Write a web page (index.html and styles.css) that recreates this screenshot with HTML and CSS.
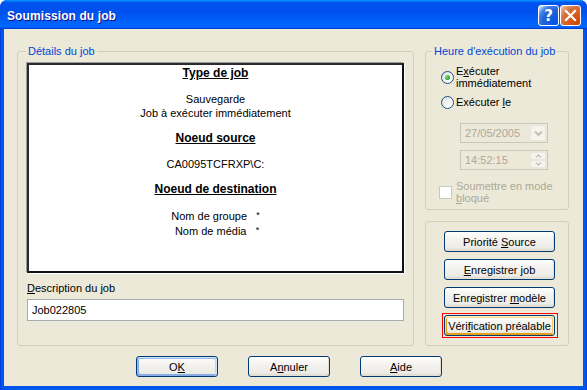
FILE: index.html
```html
<!DOCTYPE html>
<html lang="fr">
<head>
<meta charset="utf-8">
<title>Soumission du job</title>
<link rel="stylesheet" href="styles.css">
</head>
<body>
<div class="window">
  <div class="titlebar">
    <span class="title">Soumission du job</span>
    <div class="tb-buttons">
      <span class="tb-btn tb-help">?</span>
      <span class="tb-btn tb-close"><svg width="13" height="13" viewBox="0 0 13 13"><path d="M2 2 L11 11 M11 2 L2 11" stroke="#fff" stroke-width="2.2" stroke-linecap="square"/></svg></span>
    </div>
  </div>
  <div class="body">
    <div class="main">
      <fieldset class="group details">
        <legend>Détails du job</legend>
        <div class="summary">
          <div class="sec-title">Type de job</div>
          <div class="sec-text">Sauvegarde<br>Job à exécuter immédiatement</div>
          <div class="sec-title">Noeud source</div>
          <div class="sec-text">CA0095TCFRXP\C:</div>
          <div class="sec-title">Noeud de destination</div>
          <div class="sec-text pre">Nom de groupe   <span class="ast">*</span>
 Nom de média   <span class="ast">*</span></div>
        </div>
        <div class="desc-label"><u>D</u>escription du job</div>
        <div class="textbox">Job022805</div>
      </fieldset>
      <div class="right-col">
        <fieldset class="group schedule">
          <legend>Heure d'exécution du job</legend>
          <div class="opt opt-first">
            <span class="radio checked"></span>
            <span class="opt-label two">E<u>x</u>écuter<br>immédiatement</span>
          </div>
          <div class="opt">
            <span class="radio"></span>
            <span class="opt-label">Exécuter <u>l</u>e</span>
          </div>
          <div class="combo combo-date">
            <span class="combo-val">27/05/2005</span>
            <span class="combo-arrow"><svg width="9" height="7" viewBox="0 0 9 7"><path d="M1 1.5 L4.5 5 L8 1.5" fill="none" stroke="#c5c2b2" stroke-width="2"/></svg></span>
          </div>
          <div class="combo combo-time">
            <span class="combo-val">14:52:15</span>
            <span class="spin">
              <span class="spin-btn"><svg width="7" height="4" viewBox="0 0 7 4"><path d="M1 3.5 L3.5 1 L6 3.5" fill="none" stroke="#c5c2b2" stroke-width="1.4"/></svg></span>
              <span class="spin-btn"><svg width="7" height="4" viewBox="0 0 7 4"><path d="M1 0.5 L3.5 3 L6 0.5" fill="none" stroke="#c5c2b2" stroke-width="1.4"/></svg></span>
            </span>
          </div>
          <div class="opt opt-check">
            <span class="checkbox"></span>
            <span class="opt-label two disabled">Soumettre en mode<br><u>b</u>loqué</span>
          </div>
        </fieldset>
        <fieldset class="group actions">
          <button class="btn side">Priorité <u>S</u>ource</button>
          <button class="btn side"><u>E</u>nregistrer job</button>
          <button class="btn side">Enregistrer <u>m</u>odèle</button>
          <div class="focus-ring"><button class="btn side focus">Véri<u>f</u>ication préalable</button></div>
        </fieldset>
      </div>
    </div>
    <div class="footer">
      <button class="btn foot default">O<u>K</u></button>
      <button class="btn foot">A<u>n</u>nuler</button>
      <button class="btn foot"><u>A</u>ide</button>
    </div>
  </div>
</div>
</body>
</html>
```
FILE: styles.css
```css
* { box-sizing: border-box; }
html, body { margin: 0; padding: 0; }
body {
  width: 587px;
  height: 390px;
  overflow: hidden;
  background: #fff;
  font-family: "Liberation Sans", Arial, sans-serif;
  font-size: 11px;
  color: #000;
}
.window {
  width: 587px;
  height: 390px;
  display: flex;
  flex-direction: column;
  background: linear-gradient(to right, #0831d9 0, #0055ea 1px, #0055ea 586px, #0831d9 587px);
  border-radius: 7px 7px 0 0;
  overflow: hidden;
}
.titlebar {
  height: 29px;
  flex: none;
  display: flex;
  align-items: center;
  justify-content: space-between;
  padding: 2px 6px 0 7px;
  background: linear-gradient(to bottom, #0997ff 0%, #0053ee 9%, #0050ee 40%, #0066ff 86%, #0066ff 92%, #005bff 95%, #003dd7 97%, #003dd7 100%);
}
.title {
  color: #fff;
  font-weight: bold;
  font-size: 12px;
  letter-spacing: 0.1px;
  text-shadow: 1px 1px #0f1089;
}
.tb-buttons { display: flex; gap: 1px; }
.tb-btn {
  width: 21px;
  height: 21px;
  border: 1px solid #fff;
  border-radius: 3px;
  display: flex;
  align-items: center;
  justify-content: center;
  color: #fff;
}
.tb-help {
  background: radial-gradient(circle at 90% 90%, #0054e9 0%, #2263d5 55%, #4483ef 75%, #fff 100%);
  font-weight: bold;
  font-size: 15px;
  font-family: "DejaVu Sans", sans-serif;
}
.tb-close {
  background: radial-gradient(circle at 90% 90%, #cc4600 0%, #dc6527 55%, #cd7546 68%, #ffccb2 100%);
}
.body {
  flex: 1;
  margin: 0 4px 4px 4px;
  background: #ece9d8;
  padding: 16px 14px 0 13px;
  display: flex;
  flex-direction: column;
}
.main {
  display: flex;
  gap: 11px;
  height: 301px;
}
.group {
  margin: 0;
  border: 1px solid #d0d0bf;
  border-radius: 3px;
  min-width: 0;
}
.group legend {
  color: #0046d5;
  padding: 0 2px;
  line-height: 13px;
}
.details {
  width: 397px;
  padding: 0 9px;
  display: flex;
  flex-direction: column;
}
.details legend { margin-left: -1px; }
.summary {
  margin-top: 5px;
  height: 210px;
  background: #fff;
  border: 2px solid #000;
  border-color: #2b2b2b #111 #111 #2b2b2b;
  box-shadow: -1px -1px 0 #9a9a9a, 1px 1px 0 #fff;
  padding-top: 1px;
  text-align: center;
}
.sec-title {
  font-weight: bold;
  font-size: 12px;
  text-decoration: underline;
  line-height: 14px;
  margin-bottom: 12px;
}
.sec-text {
  line-height: 14px;
  margin-bottom: 11px;
}
.pre { white-space: pre; }
.ast { font-size: 9px; vertical-align: 2px; }
.desc-label {
  margin-top: 9px;
  line-height: 13px;
}
.textbox {
  margin-top: 4px;
  height: 22px;
  background: #fff;
  border: 1px solid #a5acb5;
  padding: 0 4px;
  line-height: 20px;
}
.right-col {
  width: 144px;
  display: flex;
  flex-direction: column;
  gap: 11px;
}
.schedule {
  padding: 0 0 5px 0;
}
.schedule legend { margin-left: 6px; }
.opt {
  display: flex;
  align-items: center;
  gap: 2px;
  padding-left: 15px;
}
.opt-first { margin-top: 8px; }
.opt + .opt { margin-top: 7px; }
.opt-label { line-height: 13px; }
.opt-label.two { line-height: 11.5px; }
.disabled { color: #aca899; }
.radio {
  width: 13px;
  height: 13px;
  flex: none;
  border-radius: 50%;
  border: 1px solid #1c5180;
  background: linear-gradient(135deg, #dcdcd7 0%, #fff 80%);
  display: flex;
  align-items: center;
  justify-content: center;
}
.radio.checked::after {
  content: "";
  width: 5px;
  height: 5px;
  border-radius: 50%;
  background: radial-gradient(circle at 35% 35%, #7ee37b 0%, #21a121 70%);
}
.combo {
  margin: 0 20px 0 34px;
  height: 20px;
  border: 1px solid #c9c7ba;
  background: #ece9d8;
  display: flex;
  align-items: stretch;
  color: #aca899;
}
.combo-date { margin-top: 14px; }
.combo-time { margin-top: 7px; }
.combo-val {
  flex: 1;
  padding-left: 4px;
  line-height: 18px;
}
.combo-arrow {
  width: 16px;
  margin: 1px;
  border: 1px solid #e7e5dc;
  border-radius: 2px;
  background: #f5f4ef;
  display: flex;
  align-items: center;
  justify-content: center;
}
.spin {
  width: 16px;
  margin: 1px;
  display: flex;
  flex-direction: column;
}
.spin-btn {
  flex: 1;
  border: 1px solid #e7e5dc;
  border-radius: 2px;
  background: #f5f4ef;
  display: flex;
  align-items: center;
  justify-content: center;
}
.opt-check {
  margin-top: 11px;
  padding-left: 13px;
  gap: 4px;
}
.checkbox {
  width: 13px;
  height: 13px;
  flex: none;
  border: 1px solid #cac8bb;
  background: #fff;
}
.actions {
  flex: 1;
  padding: 9px 0 0 18px;
  display: flex;
  flex-direction: column;
  gap: 7px;
}
.btn {
  font-family: "Liberation Sans", Arial, sans-serif;
  font-size: 11px;
  color: #000;
  height: 21px;
  padding: 0;
  border: 1px solid #003c74;
  border-radius: 3px;
  background: linear-gradient(to bottom, #fff 0%, #f3f2ee 40%, #ecebe6 85%, #d6d0c5 100%);
  box-shadow: inset -1px -1px 0 #e3dfd3;
  white-space: nowrap;
}
.side { width: 111px; flex: none; }
.focus-ring {
  width: 116px;
  margin: -2px 0 -2px -2px;
  border: 1px solid #ff0000;
  padding: 1px;
  display: flex;
}
.btn.focus {
  box-shadow: inset -1px 1px #fff0cf, inset 1px 2px #fdd889, inset -2px 2px #fbc761, inset 2px -2px #e5a01a;
}
.footer {
  margin-top: 10px;
  display: flex;
  gap: 30px;
  padding-left: 119px;
}
.foot { width: 82px; }
.btn.default {
  box-shadow: inset -1px 1px #cee7ff, inset 1px 2px #98b8ea, inset -2px 2px #bcd4f6, inset 1px -1px #89ade4, inset 2px -2px #89ade4;
}
```
